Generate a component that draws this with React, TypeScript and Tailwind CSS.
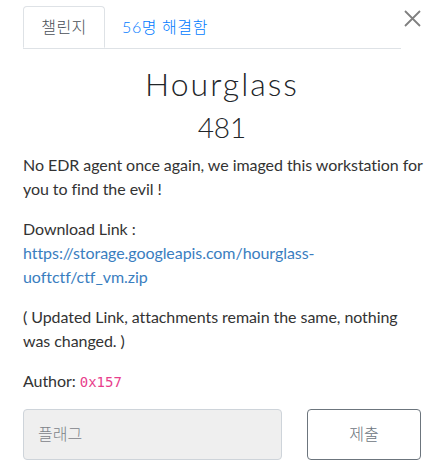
import * as React from "react";

export default function App() {
  return (
    <div
      className="w-[448px] h-[472px] bg-white text-[#212529] pl-[23px] pt-[6px]"
      style={{ fontFamily: 'Lato, "Noto Sans CJK KR", sans-serif' }}
    >
      <div className="w-[398px]">
        {/* Tabs + close */}
        <div className="flex items-start">
          <ul className="flex flex-1 border-b border-[#dee2e6]">
            <li className="-mb-px">
              <span className="block w-[82px] text-center py-2 leading-6 text-base font-light tracking-[0.5px] text-[#495057] border border-[#dee2e6] border-b-white rounded-t bg-white">
                챌린지
              </span>
            </li>
            <li>
              <span className="block px-4 py-2 leading-6 text-base font-light tracking-[0.6px] text-[#007bff] border border-transparent">
                56명 해결함
              </span>
            </li>
          </ul>
          <button className="ml-[3px] mt-[4px] w-[17px] h-[17px] text-[#808080]">
            <svg width="17" height="17" viewBox="0 0 17 17" fill="none">
              <path d="M1 1 L16 16 M16 1 L1 16" stroke="currentColor" strokeWidth="1.8" />
            </svg>
          </button>
        </div>

        {/* Title */}
        <h2 className="pt-4 text-center text-[32px] leading-[1.2] font-light tracking-[2px] mb-2">
          Hourglass
        </h2>
        <h3 className="text-center text-[28px] leading-[1.2] font-light mb-2">481</h3>

        {/* Description */}
        <div className="w-[402px] text-base leading-6 text-[#333] mt-[2px] tracking-[-0.06px]">
          <p className="mb-4">
            No EDR agent once again, we imaged this workstation for you to find the evil !
          </p>
          <p className="mb-4">
            Download Link :<br />
            <a className="text-[#3a7ebf]">
              https://storage.googleapis.com/hourglass-
              <br />
              uoftctf/ctf_vm.zip
            </a>
          </p>
          <p className="mb-4">
            ( Updated Link, attachments remain the same, nothing was changed. )
          </p>
          <p className="mb-[15px]">
            Author:{" "}
            <code
              className="text-[14px] text-[#e83e8c] tracking-normal"
              style={{ fontFamily: '"DejaVu Sans Mono", monospace' }}
            >
              0x157
            </code>
          </p>
        </div>

        {/* Flag form */}
        <div className="flex items-center gap-[25px]">
          <div className="w-[259px] h-[51px] rounded bg-[#efefef] border border-[#ced4da] flex items-center pl-[14px] text-base font-light text-[#7d8288]">
            플래그
          </div>
          <button className="w-[114px] h-[51px] rounded border border-[#6c757d] text-base font-light text-[#6c757d]">
            제출
          </button>
        </div>
      </div>
    </div>
  );
}
